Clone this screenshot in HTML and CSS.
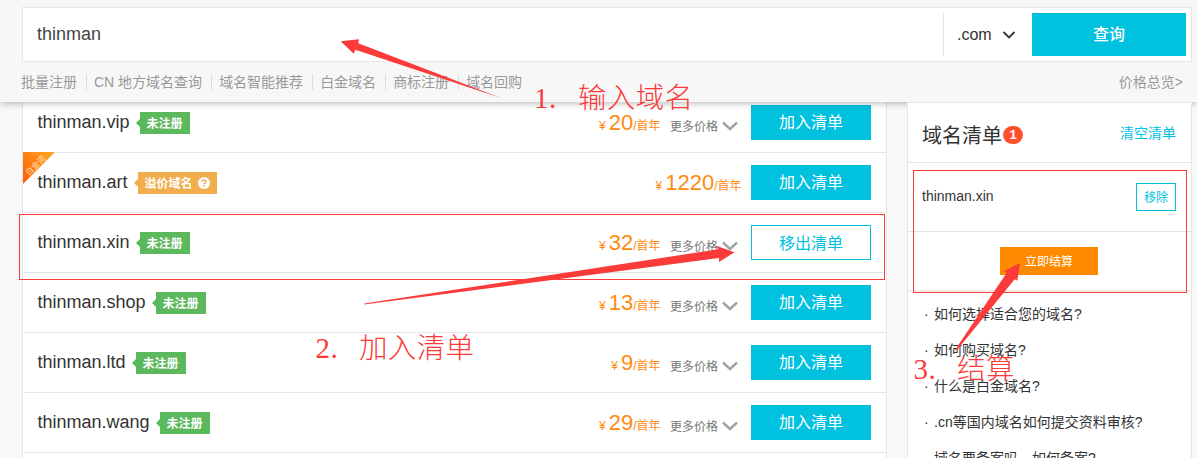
FILE: index.html
```html
<!DOCTYPE html>
<html lang="zh-CN">
<head>
<meta charset="utf-8">
<title>域名查询</title>
<link rel="stylesheet" href="styles.css">
</head>
<body>
<header class="top">
  <div class="search">
    <div class="keyword">thinman</div>
    <div class="suffix"><span>.com</span><svg width="14" height="10" viewBox="0 0 14 10"><path d="M1.500 2 7 7.500 12.500 2" fill="none" stroke="#333" stroke-width="1.8"/></svg></div>
    <div class="query">查询</div>
  </div>
  <nav class="links">
    <a>批量注册</a><a>CN 地方域名查询</a><a>域名智能推荐</a><a>白金域名</a><a>商标注册</a><a>域名回购</a>
    <span class="overview">价格总览&gt;</span>
  </nav>
</header>
<main class="content">
  <section class="list">
    <div class="row"><span class="name">thinman.vip</span><span class="tag">未注册</span><span class="price"><i>¥</i><b>20</b>/首年</span><span class="more">更多价格<svg width="16" height="10" viewBox="0 0 16 10"><path d="M1 1.500 8 8 15 1.500" fill="none" stroke="#9fa5a8" stroke-width="2.4"/></svg></span><span class="btn">加入清单</span></div>
    <div class="row"><svg class="ribbon" width="32" height="32" viewBox="0 0 32 32"><defs><linearGradient id="rg" x1="0" y1="1" x2="1" y2="0"><stop offset="0" stop-color="#ff5a00"/><stop offset="1" stop-color="#ffa826"/></linearGradient></defs><path d="M0 0H32L0 32Z" fill="url(#rg)"/><text class="ribbon-text" transform="translate(6 24) rotate(-45)">白金词</text></svg><span class="name">thinman.art</span><span class="tag premium">溢价域名<svg width="12" height="12" viewBox="0 0 12 12"><circle cx="6" cy="6" r="6" fill="#fff"/><path d="M4.100 4.700C4.100 2.400 7.900 2.400 7.900 4.600 7.900 5.900 6 5.800 6 7.300M6 8.200V9.700" fill="none" stroke="#f0ad4e" stroke-width="1.5"/></svg></span><span class="price"><i>¥</i><b>1220</b>/首年</span><span class="btn">加入清单</span></div>
    <div class="row"><span class="name">thinman.xin</span><span class="tag">未注册</span><span class="price"><i>¥</i><b>32</b>/首年</span><span class="more">更多价格<svg width="16" height="10" viewBox="0 0 16 10"><path d="M1 1.500 8 8 15 1.500" fill="none" stroke="#9fa5a8" stroke-width="2.4"/></svg></span><span class="btn outline">移出清单</span></div>
    <div class="row"><span class="name">thinman.shop</span><span class="tag">未注册</span><span class="price"><i>¥</i><b>13</b>/首年</span><span class="more">更多价格<svg width="16" height="10" viewBox="0 0 16 10"><path d="M1 1.500 8 8 15 1.500" fill="none" stroke="#9fa5a8" stroke-width="2.4"/></svg></span><span class="btn">加入清单</span></div>
    <div class="row"><span class="name">thinman.ltd</span><span class="tag">未注册</span><span class="price"><i>¥</i><b>9</b>/首年</span><span class="more">更多价格<svg width="16" height="10" viewBox="0 0 16 10"><path d="M1 1.500 8 8 15 1.500" fill="none" stroke="#9fa5a8" stroke-width="2.4"/></svg></span><span class="btn">加入清单</span></div>
    <div class="row"><span class="name">thinman.wang</span><span class="tag">未注册</span><span class="price"><i>¥</i><b>29</b>/首年</span><span class="more">更多价格<svg width="16" height="10" viewBox="0 0 16 10"><path d="M1 1.500 8 8 15 1.500" fill="none" stroke="#9fa5a8" stroke-width="2.4"/></svg></span><span class="btn">加入清单</span></div>
  </section>
  <aside class="side">
    <div class="cart-head"><span class="cart-title">域名清单</span><span class="count">1</span><span class="clear">清空清单</span></div>
    <div class="cart-item"><span>thinman.xin</span><span class="remove">移除</span></div>
    <div class="checkout"><span class="pay">立即结算</span></div>
    <ul class="faq">
      <li>如何选择适合您的域名?</li>
      <li>如何购买域名?</li>
      <li>什么是白金域名?</li>
      <li>.cn等国内域名如何提交资料审核?</li>
      <li>域名要备案吗，如何备案?</li>
    </ul>
  </aside>
</main>
<svg class="notes" width="1197" height="458" viewBox="0 0 1197 458">
  <g class="frames"><rect x="19.5" y="214.5" width="865" height="65"/><rect x="913.5" y="170.5" width="273" height="122"/></g>
  <path d="M340.7 41.3 359 39.3 358.3 43.3 501 98 355.3 49.7 353.7 53.7Z"/>
  <path d="M734.5 252.3 717 246 718 249.3 364.3 303.6 364.3 304.600 719 258 719 262Z"/>
  <path d="M1020 263 1004.3 271 1006.7 272.7 955 350 957 350 1014.7 279.3 1017.3 280.7Z"/>
  <text class="num" x="534 549" y="108">1.</text><text class="word" x="578" y="108" textLength="115">输入域名</text>
  <text class="num" x="315.500 330.500" y="358">2.</text><text class="word" x="359" y="358" textLength="115">加入清单</text>
  <text class="num" x="913.500 928.500" y="379">3.</text><text class="word" x="957" y="379" textLength="57.500">结算</text>
</svg>
</body>
</html>
```

FILE: styles.css
```css
* { box-sizing: border-box; }
body {
  margin: 0;
  width: 1197px;
  height: 458px;
  overflow: hidden;
  position: relative;
  background: #f8f8f8;
  color: #333;
  font: 14px "Liberation Sans", "Noto Sans CJK SC", sans-serif;
  white-space: nowrap;
}
.top {
  position: relative;
  z-index: 1;
  height: 102px;
  padding: 7px 5px 0 22px;
  background: #f7f7f7;
  box-shadow: 0 1px 7px rgba(0, 0, 0, .3);
}
.search {
  display: flex;
  align-items: center;
  height: 55px;
  padding: 0 5px 0 14px;
  background: #fff;
  border: 1px solid #e6e6e6;
}
.keyword { flex: 1; font-size: 18px; color: #444; }
.suffix {
  display: flex;
  align-items: center;
  gap: 10px;
  width: 89px;
  height: 43px;
  padding-left: 13px;
  border-left: 1px solid #e6e6e6;
  font-size: 16px;
}
.query {
  width: 154px;
  height: 43px;
  line-height: 43px;
  text-align: center;
  background: #00c1de;
  color: #fff;
  font-size: 16px;
  font-weight: 500;
}
.links { display: flex; align-items: center; height: 40px; margin-left: -1px; color: #999; line-height: 16px; }
.links a { padding-right: 9px; margin-right: 7px; border-right: 1px solid #ddd; }
.links a:nth-child(6) { border: 0; }
.overview { margin-left: auto; margin-right: 9px; }
.content { display: flex; gap: 20px; height: 356px; padding-left: 22px; }
.list {
  width: 865px;
  height: 365px;
  margin-top: -9px;
  background: #fff;
  border: 1px solid #e6e6e6;
  border-width: 0 1px;
}
.row {
  position: relative;
  display: flex;
  height: 60px;
  padding: 12px 15px 0 14.5px;
  border-bottom: 1px solid #e6e6e6;
}
.name { font-size: 18px; line-height: 35px; }
.tag {
  position: relative;
  display: flex;
  align-items: center;
  gap: 5px;
  height: 22px;
  margin: 7px 0 0 10px;
  padding: 0 7px 2px;
  background: #5cb85c;
  color: #fff;
  font-size: 12px;
  font-weight: bold;
}
.tag svg { margin-top: 2px; }
.tag::before {
  content: "";
  position: absolute;
  left: -4px;
  top: 7px;
  border: solid transparent;
  border-width: 4px 4px 4px 0;
  border-right-color: #5cb85c;
}
.premium { background: #f0ad4e; }
.premium::before { border-right-color: #f0ad4e; }
.price {
  margin-left: auto;
  margin-right: 9.5px;
  line-height: 35px;
  color: #ff8a12;
  font-size: 12px;
}
.price i { font-style: normal; margin-right: 3px; }
.price b { font-size: 22px; font-weight: normal; }
.more {
  display: flex;
  align-items: center;
  gap: 4px;
  height: 35px;
  margin-right: 13px;
  padding-top: 6px;
  color: #73777a;
  font-size: 12px;
}
.btn {
  width: 120px;
  height: 35px;
  line-height: 36px;
  text-align: center;
  background: #00c1de;
  color: #fff;
  font-size: 16px;
}
.outline { background: #fff; border: 1px solid #00c1de; color: #00c1de; }
.ribbon { position: absolute; left: 0; top: -1px; }
.ribbon-text { font-size: 8px; fill: #ffe2bd; }
.side {
  position: relative;
  z-index: 2;
  width: 285px;
  border: 1px solid #e6e6e6;
  border-bottom: 0;
  background: #fff;
  overflow: hidden;
}
.cart-head {
  display: flex;
  align-items: center;
  height: 60px;
  padding: 4px 15px 0 14px;
  border-bottom: 1px solid #e6e6e6;
}
.cart-title { font-size: 20px; }
.count {
  width: 20px;
  height: 18px;
  margin-left: 1px;
  border-radius: 9px;
  background: #ff4f2b;
  color: #fff;
  font-size: 13px;
  font-weight: bold;
  line-height: 18px;
  text-align: center;
}
.clear { margin-left: auto; padding-bottom: 5px; color: #00c1de; }
.cart-item {
  display: flex;
  justify-content: space-between;
  height: 69px;
  padding: 20px 15px 0 14px;
  border-bottom: 1px solid #e6e6e6;
  line-height: 26px;
}
.remove {
  width: 40px;
  height: 28px;
  border: 1px solid #00c1de;
  color: #00c1de;
  font-size: 12px;
  line-height: 28px;
  text-align: center;
}
.checkout {
  height: 59px;
  padding: 15px 0 0 92px;
  border-bottom: 1px solid #e6e6e6;
  box-shadow: 0 1px 3px rgba(0, 0, 0, .08);
}
.pay {
  display: block;
  width: 98px;
  height: 28px;
  line-height: 30px;
  background: #ff8a00;
  color: #fff;
  font-size: 12px;
  text-align: center;
}
.faq { margin: 0; padding: 5px 0 0 16px; list-style: none; line-height: 36px; }
.faq li { display: flex; }
.faq li::before { content: "·"; width: 10px; }
.notes { position: absolute; z-index: 3; left: 0; top: 0; fill: #fb3b3a; }
.frames { fill: none; stroke: #fb3b3a; }
.num { font: 29px "Liberation Serif", serif; }
.word { font: 300 28.5px "Noto Sans CJK SC", sans-serif; }
```
